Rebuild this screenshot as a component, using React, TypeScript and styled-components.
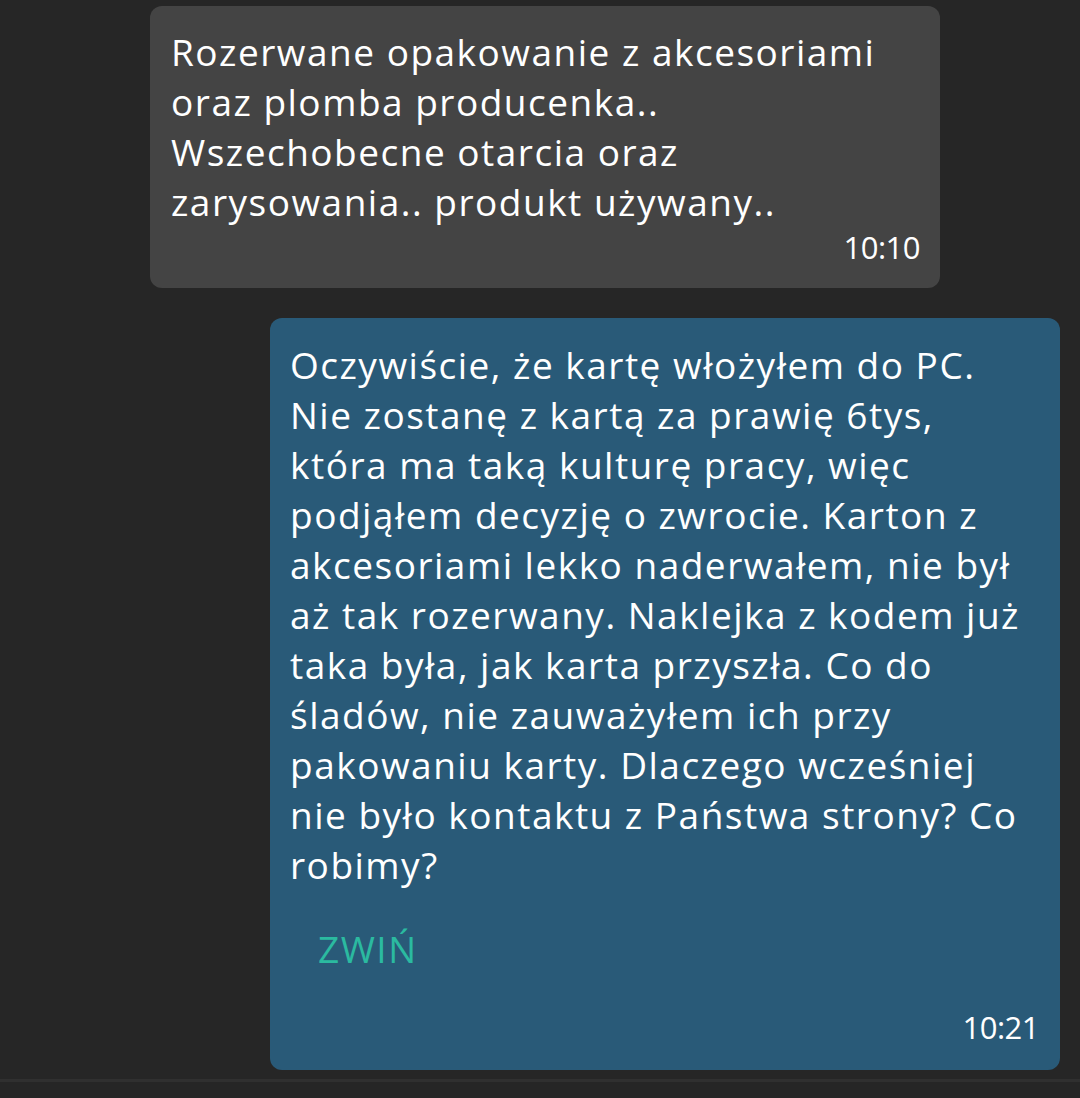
import styled, { createGlobalStyle } from "styled-components";

const GlobalStyle = createGlobalStyle`
  html, body {
    margin: 0;
    padding: 0;
    background: #262626;
  }
  body {
    font-family: "Open Sans", "Lato", sans-serif;
    -webkit-font-smoothing: antialiased;
  }
`;

const Screen = styled.div`
  width: 1080px;
  height: 1098px;
  box-sizing: border-box;
  padding-top: 6px;
  display: flex;
  flex-direction: column;
  gap: 30px;
  background: #262626;
  overflow: hidden;
  position: relative;
`;

const Row = styled.div<{ $side: "in" | "out" }>`
  display: flex;
  justify-content: flex-end;
  padding-right: ${(p) => (p.$side === "in" ? "140px" : "20px")};
`;

const Bubble = styled.div<{ $side: "in" | "out" }>`
  width: 790px;
  box-sizing: border-box;
  border-radius: 12px;
  background: ${(p) => (p.$side === "in" ? "#444444" : "#295a78")};
  padding: ${(p) => (p.$side === "in" ? "21px 20px 21px 21px" : "22px 21px 23px 20px")};
  color: #ffffff;
`;

const Line = styled.div`
  font-size: 37px;
  line-height: 50px;
  letter-spacing: 1.5px;
  white-space: nowrap;
`;

const Collapse = styled.div`
  height: 117px;
  display: flex;
  align-items: center;
  padding-left: 28px;
  font-size: 37px;
  letter-spacing: 1.5px;
  color: #2bbaa0;
`;

const Time = styled.div`
  text-align: right;
  font-size: 31px;
  line-height: 40px;
  letter-spacing: -0.5px;
`;

const Divider = styled.div`
  position: absolute;
  left: 0;
  right: 0;
  top: 1079px;
  height: 3px;
  background: #303030;
`;

const first = [
  "Rozerwane opakowanie z akcesoriami",
  "oraz plomba producenka..",
  "Wszechobecne otarcia oraz",
  "zarysowania.. produkt używany..",
];

const second = [
  "Oczywiście, że kartę włożyłem do PC.",
  "Nie zostanę z kartą za prawię 6tys,",
  "która ma taką kulturę pracy, więc",
  "podjąłem decyzję o zwrocie. Karton z",
  "akcesoriami lekko naderwałem, nie był",
  "aż tak rozerwany. Naklejka z kodem już",
  "taka była, jak karta przyszła. Co do",
  "śladów, nie zauważyłem ich przy",
  "pakowaniu karty. Dlaczego wcześniej",
  "nie było kontaktu z Państwa strony? Co",
  "robimy?",
];

export default function App() {
  return (
    <>
      <GlobalStyle />
      <Screen>
        <Row $side="in">
          <Bubble $side="in">
            {first.map((l) => (
              <Line key={l}>{l}</Line>
            ))}
            <Time>10:10</Time>
          </Bubble>
        </Row>
        <Row $side="out">
          <Bubble $side="out">
            {second.map((l) => (
              <Line key={l}>{l}</Line>
            ))}
            <Collapse>ZWIŃ</Collapse>
            <Time>10:21</Time>
          </Bubble>
        </Row>
        <Divider />
      </Screen>
    </>
  );
}
